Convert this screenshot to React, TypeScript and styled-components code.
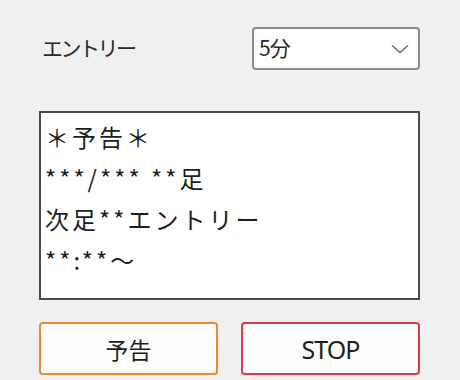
import React from 'react';
import styled, { createGlobalStyle } from 'styled-components';

const GlobalStyle = createGlobalStyle`
  html, body {
    margin: 0;
    padding: 0;
    background: #f0f0f0;
  }
  body {
    font-family: "Noto Sans CJK JP", "Noto Sans", sans-serif;
  }
`;

const Root = styled.div`
  width: 381px;
  padding: 27px 0 0 39px;
  display: flex;
  flex-direction: column;
`;

const HeaderRow = styled.div`
  height: 43px;
  display: flex;
  align-items: center;
  justify-content: space-between;
`;

const Label = styled.div`
  padding-left: 3px;
  margin-top: -3px;
  font-size: 21px;
  letter-spacing: -2.5px;
  color: #2a2a2a;
`;

const Combo = styled.div`
  box-sizing: border-box;
  width: 168px;
  height: 43px;
  display: flex;
  align-items: center;
  justify-content: space-between;
  padding: 0 9px 0 5px;
  background: #fff;
  border: 2px solid #8c8c8c;
  border-radius: 4px;
  font-size: 21px;
  color: #2a2a2a;
`;

const ComboText = styled.span`
  margin-top: -3px;
  letter-spacing: -1px;
`;

const TextBox = styled.div`
  box-sizing: border-box;
  margin-top: 41px;
  height: 189px;
  padding: 3px 4px;
  background: #fff;
  border: 2px solid #4a4a4a;
  font-size: 24px;
  line-height: 41px;
  letter-spacing: 3px;
  color: #1e1e1e;
  white-space: pre;
  overflow: hidden;
`;

const ButtonRow = styled.div`
  margin-top: 22px;
  display: grid;
  grid-template-columns: 179px 179px;
  justify-content: space-between;
`;

const ActionButton = styled.button<{ $accent: string }>`
  box-sizing: border-box;
  height: 53px;
  background: #fdfdfd;
  border: 2px solid ${(p) => p.$accent};
  border-radius: 4px;
  font-family: "Noto Sans CJK JP", "Noto Sans", sans-serif;
  font-size: 23px;
  color: #1e1e1e;
  padding: 0;
  display: flex;
  align-items: center;
  justify-content: center;
`;

const StopText = styled.span`
  font-family: "Noto Sans", sans-serif;
  font-size: 25px;
  letter-spacing: -1px;
`;

const Chevron = () => (
  <svg width="18" height="10" viewBox="0 0 18 10">
    <path d="M1 1.5 L9 8.5 L17 1.5" fill="none" stroke="#6a6a6a" strokeWidth="1.6" />
  </svg>
);

const message = ['＊予告＊', '***/*** **足', '次足**エントリー', '**:**～'].join('\n');

export default function App() {
  return (
    <Root>
      <GlobalStyle />
      <HeaderRow>
        <Label>エントリー</Label>
        <Combo>
          <ComboText>5分</ComboText>
          <Chevron />
        </Combo>
      </HeaderRow>
      <TextBox>{message}</TextBox>
      <ButtonRow>
        <ActionButton $accent="#e8893a">予告</ActionButton>
        <ActionButton $accent="#de3a44">
          <StopText>STOP</StopText>
        </ActionButton>
      </ButtonRow>
    </Root>
  );
}
